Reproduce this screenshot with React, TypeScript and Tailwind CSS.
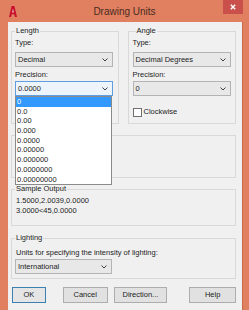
import React from "react";

function Chevron() {
  return (
    <svg width="6" height="4" viewBox="0 0 6 4" className="shrink-0">
      <polyline points="0.5,0.5 3,3 5.5,0.5" fill="none" stroke="#404040" strokeWidth="1" />
    </svg>
  );
}

function Combo({ text, focused, className = "" }: { text: string; focused?: boolean; className?: string }) {
  return (
    <div
      className={
        "h-[15px] flex items-center justify-between pl-[2px] pr-[4px] border " +
        (focused ? "border-[#5f9ee0] bg-[#eef4fb] " : "border-[#b4b4b4] bg-[#e8e8e8] ") +
        className
      }
    >
      <span className="leading-none">{text}</span>
      <Chevron />
    </div>
  );
}

const precisions = ["0", "0.0", "0.00", "0.000", "0.0000", "0.00000", "0.000000", "0.0000000", "0.00000000"];

export default function App() {
  return (
    <div className="w-[249px] h-[310px] bg-[#e08060] flex flex-col overflow-hidden font-['Liberation_Sans',Arial,sans-serif] text-[7.5px] text-[#1c1c1c]">
      {/* Title bar */}
      <div className="h-[22px] grid grid-cols-[30px_1fr_30px] items-center shrink-0">
        <div className="pl-[9px] flex items-center">
          <svg width="8" height="11" viewBox="0 0 8 11">
            <polygon points="2.6,0 5.4,0 8,11 5.9,11 5.3,8.2 2.7,8.2 2.1,11 0,11" fill="#c8102e" />
            <polygon points="3.1,6.4 4.9,6.4 4,2.6" fill="#f3c7c0" />
          </svg>
        </div>
        <div className="text-center text-[10px] text-[#4b2b20]">Drawing Units</div>
        <div className="self-start justify-self-end mr-[6px] w-[20px] h-[14px] bg-[#c9504b] flex items-center justify-center">
          <svg width="6" height="6" viewBox="0 0 6 6">
            <path d="M0.8,0.8 L5.2,5.2 M5.2,0.8 L0.8,5.2" stroke="#ffffff" strokeWidth="1.4" />
          </svg>
        </div>
      </div>

      {/* Client area */}
      <div className="ml-[8px] mr-[6px] flex-1 bg-[#f0f0f0] border-r border-[#c9694c] pl-[3px] pr-[6px] pt-[4px] flex flex-col">
        <div className="flex">
          <fieldset className="w-[108px] border border-[#d9d9d9] px-[3px] pb-[6px]">
            <legend className="px-[1px] leading-[10px]">Length</legend>
            <div className="mt-[2px] leading-[10px]">Type:</div>
            <Combo text="Decimal" className="mt-[4px] w-[98px]" />
            <div className="mt-[3px] leading-[10px]">Precision:</div>
            <div className="relative mt-[1px] w-[98px]">
              <Combo text="0.0000" focused />
              <div className="absolute left-0 top-full w-[97px] bg-white border border-[#8a8a8a] z-10">
                {precisions.map((p, i) => (
                  <div
                    key={p}
                    className={
                      "h-[9.7px] leading-[9.7px] pl-[1px] " + (i === 0 ? "bg-[#3399ff] text-white" : "")
                    }
                  >
                    {p}
                  </div>
                ))}
              </div>
            </div>
          </fieldset>
          <fieldset className="ml-[9px] w-[109px] border border-[#d9d9d9] pl-[4px] pr-[4px] pb-[6px]">
            <legend className="ml-[3px] px-[1px] leading-[10px]">Angle</legend>
            <div className="mt-[2px] leading-[10px]">Type:</div>
            <Combo text="Decimal Degrees" className="mt-[4px]" />
            <div className="mt-[3px] leading-[10px]">Precision:</div>
            <Combo text="0" className="mt-[1px]" />
            <div className="mt-[11px] flex items-center gap-[2px]">
              <div className="w-[9px] h-[9px] bg-white border border-[#707070]" />
              <span className="leading-[10px]">Clockwise</span>
            </div>
          </fieldset>
        </div>

        <div className="mt-[11px] h-[43px] border border-[#d9d9d9] px-[3px] pt-[14px]">
          <div className="w-[97px] h-[15px] border border-[#c4c4c4] bg-[#e8e8e8]" />
        </div>

        <fieldset className="mt-[6px] border border-[#d9d9d9] px-[3px] pb-[9px]">
          <legend className="px-[1px] leading-[10px]">Sample Output</legend>
          <div className="mt-[2px] pl-[1px] leading-[10px]">1.5000,2.0039,0.0000</div>
          <div className="pl-[1px] leading-[10px]">3.0000&lt;45,0.0000</div>
        </fieldset>

        <fieldset className="mt-[7px] border border-[#d9d9d9] px-[3px] pb-[4px]">
          <legend className="px-[1px] leading-[10px]">Lighting</legend>
          <div className="mt-[5px] pl-[1px] leading-[10px]">Units for specifying the intensity of lighting:</div>
          <Combo text="International" className="mt-[1px] w-[97px]" />
        </fieldset>

        <div className="mt-[8px] flex">
          <button className="ml-[1px] w-[34px] h-[16px] border border-[#3c7fb1] bg-[#e5e5e5] leading-none">OK</button>
          <button className="ml-[17px] w-[45px] h-[16px] border border-[#adadad] bg-[#e1e1e1] leading-none">Cancel</button>
          <button className="ml-[6px] w-[54px] h-[16px] border border-[#adadad] bg-[#e1e1e1] leading-none">Direction...</button>
          <button className="ml-[22px] w-[47px] h-[16px] border border-[#adadad] bg-[#e1e1e1] leading-none">Help</button>
        </div>
      </div>
    </div>
  );
}
